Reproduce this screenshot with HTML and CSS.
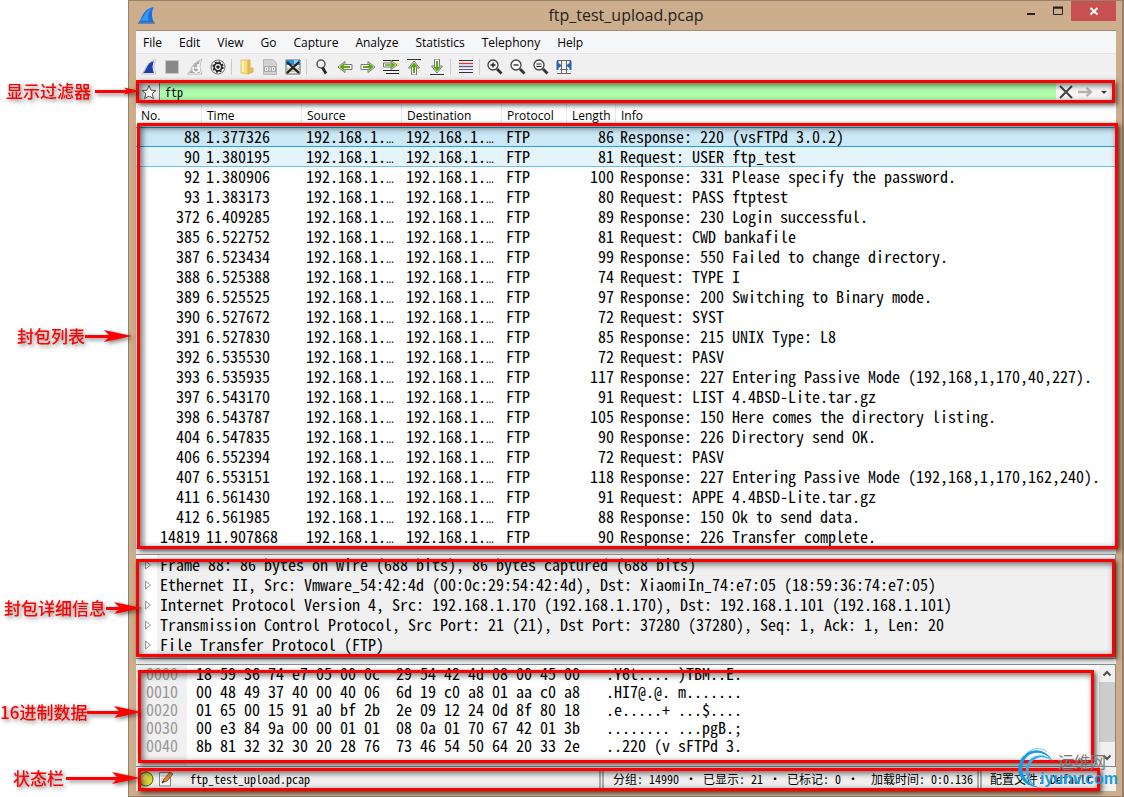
FILE: index.html
```html
<!DOCTYPE html>
<html lang="zh-CN">
<head>
<meta charset="utf-8">
<title>ftp_test_upload.pcap</title>
<link rel="stylesheet" href="styles.css">
</head>
<body>
<svg class="defs" aria-hidden="true">
  <symbol id="head" viewBox="0 0 28 14"><path d="M0 1L28 7L0 13L6 7Z" fill="#f00"/></symbol>
  <symbol id="arr" viewBox="0 0 16 16"><path d="M1 5.500H8V2.500L15 8L8 13.500V10.500H1Z" fill="#fff" stroke="#777"/><path d="M3 8H11M8.500 5L12 8L8.500 11" fill="none" stroke="#5aa814" stroke-width="2"/></symbol>
  <symbol id="lens" viewBox="0 0 16 16"><circle cx="6" cy="6" r="5" fill="#f7f7f7" stroke="#444" stroke-width="1.300"/><path d="M10 10L14.500 14.500" stroke="#333" stroke-width="2.800"/></symbol>
</svg>
<main class="window">
  <header class="titlebar">
    <svg class="appicon" viewBox="0 0 16 16"><path d="M0 15C4 13 3 2 15 0C12 5 13 11 15.500 15Z" fill="#1673e0"/><path d="M2 13C6 10 6 4 13 1C9 5 9 10 10 13Z" fill="#3797f5"/><path d="M0 14.500H16V16H0Z" fill="#6c8496"/></svg>
    <h1>ftp_test_upload.pcap</h1>
    <div class="winbtns">
      <button aria-label="Minimize"><svg viewBox="0 0 12 12"><path d="M2 9H10" stroke="#222" stroke-width="2"/></svg></button>
      <button aria-label="Maximize"><svg viewBox="0 0 12 12"><path d="M1.500 3H10.500V9.500H1.500Z" fill="none" stroke="#222"/><path d="M1 2.500H11" stroke="#222" stroke-width="2"/></svg></button>
      <button class="close" aria-label="Close"><svg viewBox="0 0 12 12"><path d="M2.500 3L9.500 9.500M9.500 3L2.500 9.500" stroke="#fff" stroke-width="2"/></svg></button>
    </div>
  </header>
  <div class="client">
    <nav class="menu">
      <button>File</button><button>Edit</button><button>View</button><button>Go</button><button>Capture</button><button>Analyze</button><button>Statistics</button><button>Telephony</button><button>Help</button>
    </nav>
    <div class="toolbar">
      <button aria-label="Start capture"><svg viewBox="0 0 16 16"><path d="M.5 15C5 12 4 3 15 .5C12 6 13 11 15 15Z" fill="#fff" stroke="#c0c0c8"/><path d="M2 14C6 11 5 4 13 2C11 7 11.500 10 13 14Z" fill="#1f3fae"/></svg></button>
      <button aria-label="Stop capture"><svg viewBox="0 0 16 16"><path d="M1.500 1.500H14.500V14.500H1.500Z" fill="#888" stroke="#c8c8c8"/></svg></button>
      <button aria-label="Restart capture"><svg viewBox="0 0 16 16"><path d="M.5 15C5 12 4 3 15 .5C12 6 13 11 15 15Z" fill="#fff" stroke="#b8b8b8"/><path d="M2 14C6 11 5 4 13 2C11 7 11.500 10 13 14Z" fill="#aaa"/><path d="M7 8A3 3 0 1 0 11 8M11 5V9H8" fill="none" stroke="#fff" stroke-width="1.500"/></svg></button>
      <button aria-label="Capture options"><svg viewBox="0 0 16 16"><circle cx="8" cy="8" r="7" fill="#fff" stroke="#666"/><circle cx="8" cy="8" r="3.800" fill="none" stroke="#222" stroke-width="1.800"/><circle cx="8" cy="8" r="5" fill="none" stroke="#222" stroke-width="1.500" stroke-dasharray="2 1.930"/><circle cx="8" cy="8" r="1.800" fill="#222"/></svg></button>
      <i class="sep"></i>
      <button aria-label="Open"><svg viewBox="0 0 16 16"><path d="M2 1H9V15L2 14Z" fill="#f7dc84" stroke="#e8c968"/><path d="M9 1H11V9H14V13L9 15Z" fill="#e5bd54" stroke="#dcb450"/><path d="M4 2V13" stroke="#fff3bd" stroke-width="2"/></svg></button>
      <button aria-label="Save"><svg viewBox="0 0 16 16"><path d="M1.500 .5H11L14.500 4V15.500H1.500Z" fill="#d2d2d2" stroke="#b8b8b8"/><path d="M2 7H14V13H2Z" fill="#aaa"/><path d="M3.500 8.500H5.500V11.500H3.500ZM8 8V12M10.500 8.500H12.500V11.500H10.500Z" fill="none" stroke="#fff"/></svg></button>
      <button aria-label="Close file"><svg viewBox="0 0 16 16"><path d="M1 1H15V15H1Z" fill="#eee" stroke="#666"/><path d="M1 1H15V6H1Z" fill="#2694d1"/><path d="M9 1H13V5H9Z" fill="#8ed0f3"/><path d="M2 9H14V13H2Z" fill="#c8c8aa"/><path d="M2 3L14 14M14 3L2 14" stroke="#222" stroke-width="2.300"/></svg></button>
      <i class="sep"></i>
      <button aria-label="Find"><svg viewBox="0 0 16 16"><circle cx="7" cy="5" r="4" fill="#eee" stroke="#555" stroke-width="1.500"/><path d="M5 4A2 2 0 0 1 7 3" fill="none" stroke="#fff"/><path d="M8.500 8.500L12 14.500" stroke="#222" stroke-width="2.800"/></svg></button>
      <button aria-label="Back"><svg class="left" viewBox="0 0 16 16"><use href="#arr"/></svg></button>
      <button aria-label="Forward"><svg viewBox="0 0 16 16"><use href="#arr"/></svg></button>
      <button aria-label="Go to packet"><svg viewBox="0 0 16 16"><path d="M0 1.500H16M0 11.500H16M3 14.500H16" stroke="#222"/><path d="M10 4H16V7H10Z" fill="#fce34f"/><path d="M.5 4H8V1.500L14 6L8 10.500V8H.5Z" fill="#fff" stroke="#777"/><path d="M2 6H11M8 3.500L11 6L8 8.500" fill="none" stroke="#5aa814" stroke-width="1.700"/></svg></button>
      <button aria-label="First packet"><svg viewBox="0 0 16 16"><path d="M1 .5H15" stroke="#333"/><g transform="rotate(-90 8 8) translate(-1 0)"><use href="#arr"/></g></svg></button>
      <button aria-label="Last packet"><svg viewBox="0 0 16 16"><path d="M1 15.500H15" stroke="#333"/><g transform="rotate(90 8 8) translate(-1 0)"><use href="#arr"/></g></svg></button>
      <i class="sep"></i>
      <button aria-label="Auto scroll"><svg viewBox="0 0 16 16"><path d="M1 1.500H15M1 13.500H15" stroke="#333"/><path d="M1 4.500H15" stroke="#e33" stroke-width="1.300"/><path d="M1 7.500H15" stroke="#3765a5" stroke-width="1.300"/><path d="M1 10.500H15" stroke="#75507b"/></svg></button>
      <i class="sep"></i>
      <button aria-label="Zoom in"><svg viewBox="0 0 16 16"><use href="#lens"/><path d="M3.500 6H8.500M6 3.500V8.500" stroke="#222" stroke-width="1.300"/></svg></button>
      <button aria-label="Zoom out"><svg viewBox="0 0 16 16"><use href="#lens"/><path d="M3.500 6H8.500" stroke="#222" stroke-width="1.300"/></svg></button>
      <button aria-label="Normal size"><svg viewBox="0 0 16 16"><use href="#lens"/><path d="M3.500 5H8.500M3.500 7.500H8.500" stroke="#222"/></svg></button>
      <button aria-label="Resize columns"><svg viewBox="0 0 16 16"><path d="M1 1.500H15M4 10.500H12M1 14.500H15M5.500 1V15M10.500 1V15" stroke="#666"/><path d="M1.500 2V11M14.500 2V11" stroke="#2864aa" stroke-width="2"/><path d="M1 3L6 6.500L1 10ZM15 3L10 6.500L15 10Z" fill="#2864aa"/></svg></button>
    </div>

    <section class="filter">
      <button aria-label="Bookmark" class="star"><svg viewBox="0 0 16 16"><path d="M8 1.500L10 6.200L15 6.500L11.200 9.700L12.500 14.700L8 12L3.500 14.700L4.800 9.700L1 6.500L6 6.200Z" fill="#fff" stroke="#555"/></svg></button>
      <input type="text" value="ftp" aria-label="Display filter">
      <button aria-label="Clear"><svg viewBox="0 0 16 16"><path d="M2 2L14 14M14 2L2 14" stroke="#444" stroke-width="2"/></svg></button>
      <button aria-label="Apply"><svg viewBox="0 0 16 16"><path d="M1 8H14M9.500 4L14 8L9.500 12" fill="none" stroke="#b4b4ac" stroke-width="2.300"/></svg></button>
      <button aria-label="History"><svg viewBox="0 0 16 16"><path d="M5 7H11L8 10Z" fill="#444"/></svg></button>
      <div class="mark"></div>
      <div class="callout c1"><b>显示过滤器</b><i></i><svg><use href="#head"/></svg></div>
    </section>

    <section class="packets">
      <table>
        <colgroup><col class="w-no"><col class="w-a"><col class="w-a"><col class="w-a"><col class="w-pr"><col class="w-len"><col></colgroup>
        <thead><tr><th>No.</th><th>Time</th><th>Source</th><th>Destination</th><th>Protocol</th><th>Length</th><th>Info</th></tr></thead>
        <tbody>
          <tr class="sel"><td>88</td><td>1.377326</td><td>192.168.1.<i>…</i></td><td>192.168.1.<i>…</i></td><td>FTP</td><td>86</td><td>Response: 220 (vsFTPd 3.0.2)</td></tr>
          <tr class="hov"><td>90</td><td>1.380195</td><td>192.168.1.<i>…</i></td><td>192.168.1.<i>…</i></td><td>FTP</td><td>81</td><td>Request: USER ftp_test</td></tr>
          <tr><td>92</td><td>1.380906</td><td>192.168.1.<i>…</i></td><td>192.168.1.<i>…</i></td><td>FTP</td><td>100</td><td>Response: 331 Please specify the password.</td></tr>
          <tr><td>93</td><td>1.383173</td><td>192.168.1.<i>…</i></td><td>192.168.1.<i>…</i></td><td>FTP</td><td>80</td><td>Request: PASS ftptest</td></tr>
          <tr><td>372</td><td>6.409285</td><td>192.168.1.<i>…</i></td><td>192.168.1.<i>…</i></td><td>FTP</td><td>89</td><td>Response: 230 Login successful.</td></tr>
          <tr><td>385</td><td>6.522752</td><td>192.168.1.<i>…</i></td><td>192.168.1.<i>…</i></td><td>FTP</td><td>81</td><td>Request: CWD bankafile</td></tr>
          <tr><td>387</td><td>6.523434</td><td>192.168.1.<i>…</i></td><td>192.168.1.<i>…</i></td><td>FTP</td><td>99</td><td>Response: 550 Failed to change directory.</td></tr>
          <tr><td>388</td><td>6.525388</td><td>192.168.1.<i>…</i></td><td>192.168.1.<i>…</i></td><td>FTP</td><td>74</td><td>Request: TYPE I</td></tr>
          <tr><td>389</td><td>6.525525</td><td>192.168.1.<i>…</i></td><td>192.168.1.<i>…</i></td><td>FTP</td><td>97</td><td>Response: 200 Switching to Binary mode.</td></tr>
          <tr><td>390</td><td>6.527672</td><td>192.168.1.<i>…</i></td><td>192.168.1.<i>…</i></td><td>FTP</td><td>72</td><td>Request: SYST</td></tr>
          <tr><td>391</td><td>6.527830</td><td>192.168.1.<i>…</i></td><td>192.168.1.<i>…</i></td><td>FTP</td><td>85</td><td>Response: 215 UNIX Type: L8</td></tr>
          <tr><td>392</td><td>6.535530</td><td>192.168.1.<i>…</i></td><td>192.168.1.<i>…</i></td><td>FTP</td><td>72</td><td>Request: PASV</td></tr>
          <tr><td>393</td><td>6.535935</td><td>192.168.1.<i>…</i></td><td>192.168.1.<i>…</i></td><td>FTP</td><td>117</td><td>Response: 227 Entering Passive Mode (192,168,1,170,40,227).</td></tr>
          <tr><td>397</td><td>6.543170</td><td>192.168.1.<i>…</i></td><td>192.168.1.<i>…</i></td><td>FTP</td><td>91</td><td>Request: LIST 4.4BSD-Lite.tar.gz</td></tr>
          <tr><td>398</td><td>6.543787</td><td>192.168.1.<i>…</i></td><td>192.168.1.<i>…</i></td><td>FTP</td><td>105</td><td>Response: 150 Here comes the directory listing.</td></tr>
          <tr><td>404</td><td>6.547835</td><td>192.168.1.<i>…</i></td><td>192.168.1.<i>…</i></td><td>FTP</td><td>90</td><td>Response: 226 Directory send OK.</td></tr>
          <tr><td>406</td><td>6.552394</td><td>192.168.1.<i>…</i></td><td>192.168.1.<i>…</i></td><td>FTP</td><td>72</td><td>Request: PASV</td></tr>
          <tr><td>407</td><td>6.553151</td><td>192.168.1.<i>…</i></td><td>192.168.1.<i>…</i></td><td>FTP</td><td>118</td><td>Response: 227 Entering Passive Mode (192,168,1,170,162,240).</td></tr>
          <tr><td>411</td><td>6.561430</td><td>192.168.1.<i>…</i></td><td>192.168.1.<i>…</i></td><td>FTP</td><td>91</td><td>Request: APPE 4.4BSD-Lite.tar.gz</td></tr>
          <tr><td>412</td><td>6.561985</td><td>192.168.1.<i>…</i></td><td>192.168.1.<i>…</i></td><td>FTP</td><td>88</td><td>Response: 150 Ok to send data.</td></tr>
          <tr><td>14819</td><td>11.907868</td><td>192.168.1.<i>…</i></td><td>192.168.1.<i>…</i></td><td>FTP</td><td>90</td><td>Response: 226 Transfer complete.</td></tr>
        </tbody>
      </table>
      <div class="mark"></div>
      <div class="callout c2"><b>封包列表</b><i></i><svg><use href="#head"/></svg></div>
    </section>

    <section class="details">
      <ul>
        <li><svg viewBox="0 0 8 10"><path d="M1.500 1L6.500 5L1.500 9Z"/></svg><span>Frame 88: 86 bytes on wire (688 bits), 86 bytes captured (688 bits)</span></li>
        <li><svg viewBox="0 0 8 10"><path d="M1.500 1L6.500 5L1.500 9Z"/></svg><span>Ethernet II, Src: Vmware_54:42:4d (00:0c:29:54:42:4d), Dst: XiaomiIn_74:e7:05 (18:59:36:74:e7:05)</span></li>
        <li><svg viewBox="0 0 8 10"><path d="M1.500 1L6.500 5L1.500 9Z"/></svg><span>Internet Protocol Version 4, Src: 192.168.1.170 (192.168.1.170), Dst: 192.168.1.101 (192.168.1.101)</span></li>
        <li><svg viewBox="0 0 8 10"><path d="M1.500 1L6.500 5L1.500 9Z"/></svg><span>Transmission Control Protocol, Src Port: 21 (21), Dst Port: 37280 (37280), Seq: 1, Ack: 1, Len: 20</span></li>
        <li><svg viewBox="0 0 8 10"><path d="M1.500 1L6.500 5L1.500 9Z"/></svg><span>File Transfer Protocol (FTP)</span></li>
      </ul>
      <div class="mark"></div>
      <div class="callout c3"><b>封包详细信息</b><i></i><svg><use href="#head"/></svg></div>
    </section>

    <section class="hex">
      <table>
        <tbody>
          <tr><th>0000</th><td>18 59 36 74 e7 05 00 0c</td><td>29 54 42 4d 08 00 45 00</td><td>.Y6t.... )TBM..E.</td></tr>
          <tr><th>0010</th><td>00 48 49 37 40 00 40 06</td><td>6d 19 c0 a8 01 aa c0 a8</td><td>.HI7@.@. m.......</td></tr>
          <tr><th>0020</th><td>01 65 00 15 91 a0 bf 2b</td><td>2e 09 12 24 0d 8f 80 18</td><td>.e.....+ ...$....</td></tr>
          <tr><th>0030</th><td>00 e3 84 9a 00 00 01 01</td><td>08 0a 01 70 67 42 01 3b</td><td>........ ...pgB.;</td></tr>
          <tr><th>0040</th><td>8b 81 32 32 30 20 28 76</td><td>73 46 54 50 64 20 33 2e</td><td>..220 (v sFTPd 3.</td></tr>
        </tbody>
      </table>
      <div class="scroll">
        <svg viewBox="0 0 16 16"><path d="M4.500 10L8 6.500L11.500 10" fill="none" stroke="#505050" stroke-width="2"/></svg>
        <i></i>
        <svg viewBox="0 0 16 16"><path d="M4.500 6L8 9.500L11.500 6" fill="none" stroke="#505050" stroke-width="2"/></svg>
      </div>
      <div class="mark"></div>
      <div class="callout c4"><b>16进制数据</b><i></i><svg><use href="#head"/></svg></div>
    </section>

    <footer class="status">
      <svg class="dot" viewBox="0 0 16 16"><circle cx="8" cy="8" r="7" fill="#d9d935" stroke="#55551d"/><circle cx="6" cy="6" r="3" fill="#ecec72"/></svg>
      <svg class="note" viewBox="0 0 16 16"><path d="M1.500 1.500H12.500V15H1.500Z" fill="#f8f8f8" stroke="#888"/><path d="M3 5H9M3 8H7" stroke="#bbb"/><path d="M4 12L6 8L12 1L15 3L9 10Z" fill="#dd8c3d" stroke="#a75e25"/><path d="M4 12L5 9.500L6.500 10.700Z" fill="#222"/></svg>
      <span class="file">ftp_test_upload.pcap</span>
      <span class="counts">分组: 14990 <i>·</i> 已显示: 21 <i>·</i> 已标记: 0 <i>·</i> &nbsp;加载时间: 0:0.136</span>
      <span class="profile">配置文件: Default</span>
      <div class="mark"></div>
      <div class="callout c5"><b>状态栏</b><i></i><svg><use href="#head"/></svg></div>
    </footer>
  </div>
  <div class="watermark">
    <svg viewBox="0 0 44 44"><path d="M37 15C31 0 11 -1 4 14C-2 29 9 40 25 41C13 38 4 29 7 17C11 3 28 2 37 15Z" fill="#189be0"/><path d="M36 14C27 3 11 9 10 22C9 29 13 35 18 38C14 33 11 28 13 21C16 10 27 7 36 14Z" fill="#36aeea"/><path d="M8 9C14 0 26 0 31 5" fill="none" stroke="#78caee"/></svg>
    <div><span>运维网</span><strong>iyunv.com</strong></div>
  </div>
</main>
</body>
</html>
```
FILE: styles.css
```css
* { box-sizing: border-box; }
body {
  margin: 0;
  padding-left: 128px;
  background: #fff;
  color: #000;
  font: 12px/20px "Open Sans", "Noto Sans CJK SC", sans-serif;
}
button {
  border: 0;
  padding: 0;
  background: none;
  font: inherit;
  color: inherit;
}
svg { display: block; }
.defs { position: absolute; width: 0; height: 0; }

.window {
  position: relative;
  min-height: 100vh;
  padding: 0 6px 5px 7px;
  background: #cdae8c;
  border: 1px solid #98806a;
  border-right-width: 2px;
}
.titlebar {
  display: grid;
  grid-template-columns: 1fr auto 1fr;
  height: 29px;
}
.appicon { width: 17px; height: 17px; margin: 6px 0 0 2px; }
.titlebar h1 {
  margin: 0;
  font-size: 16px;
  line-height: 29px;
  font-weight: 400;
  color: #222;
}
.winbtns { display: flex; justify-content: flex-end; align-items: flex-start; }
.winbtns button { width: 27px; height: 20px; display: grid; place-items: center; }
.winbtns svg { width: 12px; height: 12px; }
.winbtns .close { width: 45px; background: #c75050; }

.client { border: 1px solid #a48c74; border-width: 1px 0 0; background: #f0f0f0; }
.menu {
  display: flex;
  gap: 17px;
  height: 23px;
  padding-left: 7px;
  background: #f5f6f7;
  border-bottom: 1px solid #e3e3e3;
}
.menu button { line-height: 23px; }
.toolbar { display: flex; align-items: center; height: 26px; padding-left: 1px; }
.toolbar button { width: 23px; display: grid; place-items: center; }
.toolbar svg { width: 16px; height: 16px; }
.toolbar .left { transform: scaleX(-1); }
.sep { width: 1px; height: 16px; margin: 0 3px 0 2px; background: #ccc; }

.mark {
  position: absolute;
  border: 3px solid #f00;
  box-shadow: 2px 2px 5px rgba(0, 0, 0, .7), inset 2px 2px 6px rgba(0, 0, 0, .6);
  pointer-events: none;
}
.callout {
  position: absolute;
  left: -136px;
  display: flex;
  align-items: center;
  color: #f00;
  font: 17px/20px "Noto Sans CJK SC", sans-serif;
  filter: drop-shadow(2px 2px 2px rgba(0, 0, 0, .5));
  white-space: nowrap;
}
.callout b { font-weight: 500; }
.callout i { flex: 1; height: 3px; margin-right: -8px; background: #f00; }
.callout svg { width: 28px; height: 14px; }
.c1 { top: 1px; width: 140px; padding-left: 6px; gap: 4px; }
.c2 { top: 223px; width: 132px; padding-left: 17px; }
.c3 { top: 43px; width: 142px; padding-left: 4px; }
.c4 { top: 37px; width: 142px; }
.c5 { top: 1px; width: 140px; padding-left: 13px; gap: 2px; }

.filter { position: relative; z-index: 1; display: flex; height: 23px; padding: 0 3px; background: #f6f6f6; }
.filter button { width: 19px; display: grid; place-items: center; }
.filter .star { width: 21px; border-right: 1px solid #777; background: #e9e9e9; }
.filter svg { width: 16px; height: 16px; }
.filter input {
  flex: 1;
  min-width: 0;
  border: 0;
  padding: 0 5px;
  background: #afffaf;
  font: 12px/20px "Noto Sans Mono CJK SC", "Liberation Mono", monospace;
}
.filter .mark { inset: 0 1px 0 0; }

.packets {
  position: relative;
  background: #fff;
  border-bottom: 1px solid #828790;
  padding-bottom: 1px;
}
table { border-collapse: separate; border-spacing: 0; }
td, .details li, .hex th {
  font: 16px/18px "Noto Sans Mono CJK SC", "Liberation Mono", monospace;
  white-space: pre;
}
.packets table { width: 100%; table-layout: fixed; }
.w-no { width: 66px; }
.w-a { width: 100px; }
.w-pr { width: 65px; }
.w-len { width: 49px; }
.packets th {
  height: 24px;
  padding: 1px 0 0 5px;
  text-align: left;
  font-weight: 400;
  border-right: 1px solid #dfebf7;
}
.packets th:last-child { border-right: 0; }
.packets td { height: 20px; padding: 0 0 0 4px; vertical-align: top; }
.packets td i { font: 13px/1px "Liberation Mono", monospace; }
.packets td:nth-child(1), .packets td:nth-child(6) { text-align: right; padding: 0 2px 0 0; }
.packets tbody { background: linear-gradient(90deg, #f0f0f0 10px, #fff 10px); }
.packets .sel td { background: #cbe8f6; box-shadow: inset 0 1px #26a0da, inset 0 -1px #26a0da; }
.packets .hov td { background: #e5f3fb; box-shadow: inset 0 -1px #70c0e7; }
.packets .mark { inset: 20px -2px -1px 1px; }

.details {
  position: relative;
  margin-top: 5px;
  border: 1px solid #828790;
  border-left: 0;
  background: linear-gradient(90deg, #fff 21px, #f0f0f0 21px);
}
.details ul { margin: 0; padding: 0 0 3px; list-style: none; }
.details li { display: flex; height: 20px; }
.details li svg { width: 24px; height: 10px; margin-top: 5px; flex: none; }
.details path { fill: #fff; stroke: #999; }
.details .mark { inset: 4px 0 1px 0; }

.hex {
  position: relative;
  display: flex;
  justify-content: space-between;
  height: 103px;
  margin-top: 5px;
  border: 1px solid #828790;
  border-left: 0;
  background: linear-gradient(90deg, #f0f0f0 51px, #fff 51px);
}
.hex table { align-self: flex-start; }
.hex th, .hex td { height: 18px; line-height: 16px; padding: 0; text-align: left; vertical-align: top; }
.hex th { width: 60px; padding-left: 10px; font-weight: 400; color: #999; }
.hex td:nth-child(2) { width: 200px; }
.hex td:nth-child(3) { width: 210px; }
.hex .scroll { display: flex; flex-direction: column; width: 16px; background: #f0f0f0; }
.hex .scroll svg { width: 16px; height: 17px; }
.hex .scroll i { height: 60px; background: #cdcdcd; margin-bottom: 7px; }
.hex .mark { inset: 5px 21px 3px 2px; }

.status {
  position: relative;
  display: flex;
  align-items: center;
  height: 24px;
  padding-left: 2px;
  font: 12px/20px "Noto Sans Mono CJK SC", "Liberation Mono", "Noto Sans CJK SC", monospace;
  white-space: nowrap;
}
.dot, .note { width: 16px; height: 16px; margin-right: 4px; }
.file { flex: 1; padding-left: 12px; }
.counts { border-left: 5px double #aaa; padding: 0 4px 0 9px; }
.counts i { display: inline-block; width: 12px; text-align: center; font-style: normal; }
.profile { border-left: 5px double #aaa; padding-left: 8px; width: 139px; }
.status .mark { inset: 1px 16px 0 2px; }

.watermark {
  position: absolute;
  right: 4px;
  bottom: 5px;
  display: flex;
}
.watermark svg { width: 44px; height: 44px; margin-right: -20px; }
.watermark div { display: flex; flex-direction: column; padding-top: 5px; }
.watermark span { color: #777; font: 16px/18px "Noto Sans CJK SC", sans-serif; padding-left: 18px; }
.watermark strong { color: #189be0; font: bold 16px/18px "Liberation Sans", sans-serif; }
```
